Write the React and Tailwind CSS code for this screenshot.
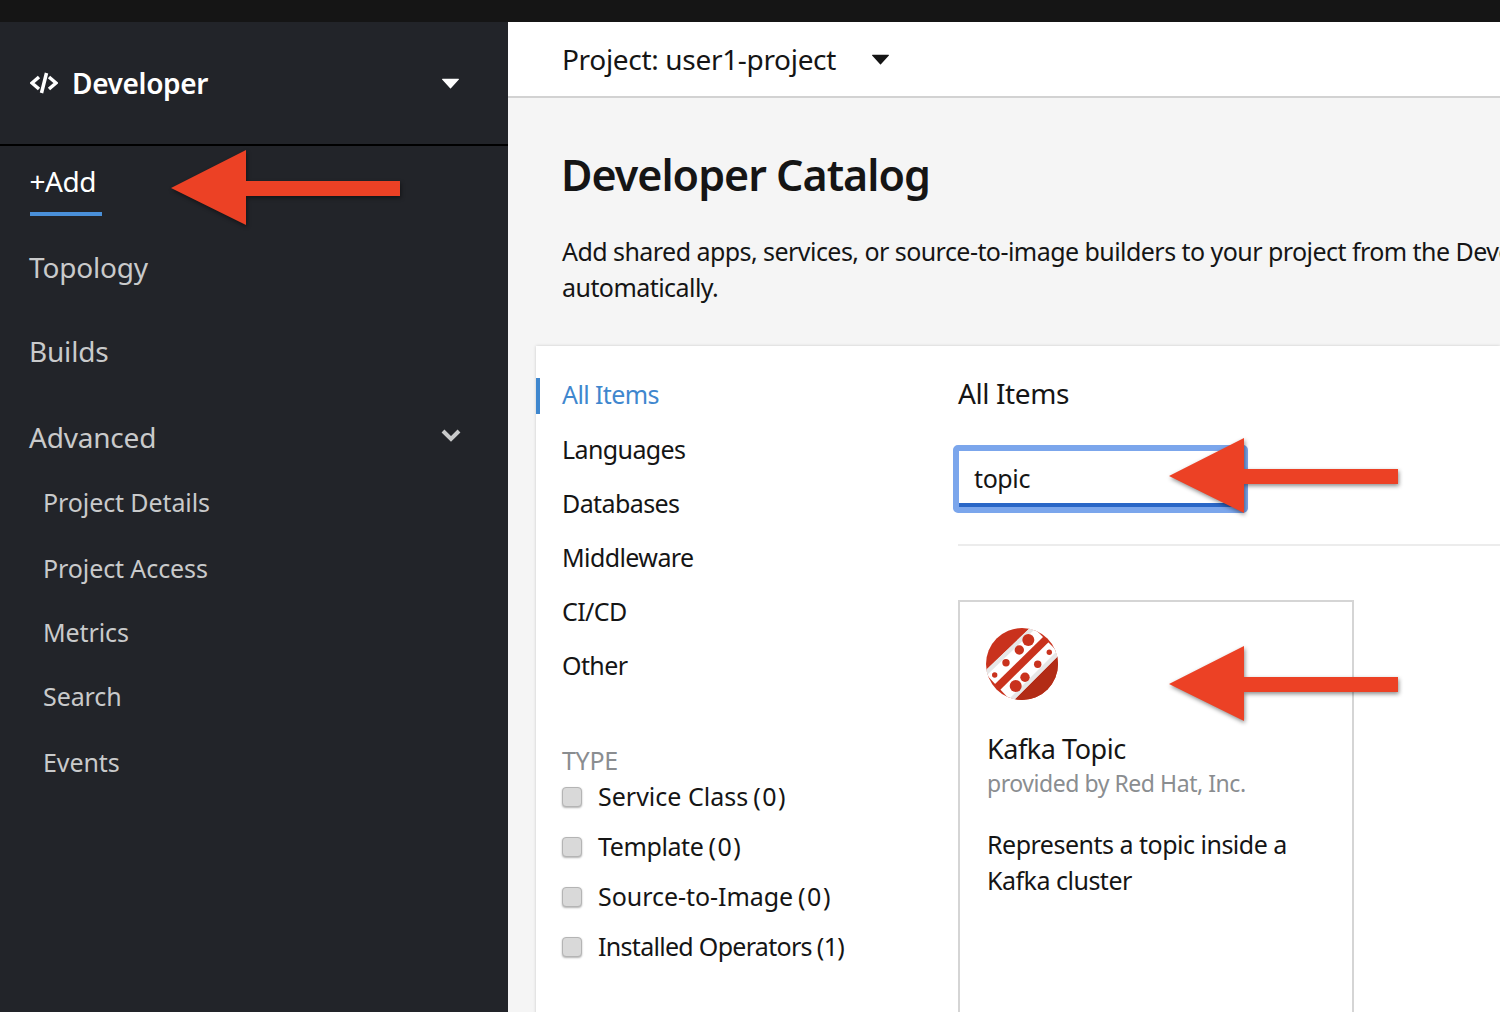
import React from 'react';

const font = { fontFamily: '"Noto Sans", sans-serif' };

const Caret = ({ className }) => (
  <svg viewBox="0 0 16 10" className={className} fill="currentColor">
    <path d="M0.5 0.5h15a0.5 0.5 0 0 1 .4.8L8.4 9.4a0.5 0.5 0 0 1-.8 0L0.1 1.3a0.5 0.5 0 0 1 .4-.8z" />
  </svg>
);

// red annotation arrow pasted over the screenshot
const Arrow = ({ className }) => (
  <svg viewBox="0 0 232 78" className={`absolute drop-shadow-[1px_2px_2px_rgba(0,0,0,0.45)] ${className}`}>
    <path d="M1 38 L76 0 V31 H230 V46 H76 V75 Z" fill="#ec4125" />
  </svg>
);

const KafkaLogo = () => (
  <svg viewBox="0 0 72 72" className="w-[72px] h-[72px]">
    <defs>
      <clipPath id="disc">
        <circle cx="36" cy="36" r="36" />
      </clipPath>
    </defs>
    <g clipPath="url(#disc)">
      <rect width="72" height="72" fill="#c9321d" />
      <path d="M26 74 L74 26 V74 Z" fill="#b22c16" />
      <path d="M-2 44 L46 -2 L74 26 L26 74 Z" fill="#ffffff" />
      <path d="M-2 44 L46 -2 L49 1 L1 47 Z" fill="#e6e6e6" />
      <path d="M74 26 L26 74 L23 71 L71 23 Z" fill="#e6e6e6" />
      <path d="M8 57 L57.3 8.7 L63 13.7 L13.3 62.7 Z" fill="#c9321d" />
      <circle cx="42.3" cy="12" r="6" fill="#c9321d" />
      <circle cx="33.3" cy="22" r="4.7" fill="#c9321d" />
      <circle cx="20" cy="34.7" r="3.7" fill="#c9321d" />
      <circle cx="8.7" cy="47" r="2.7" fill="#c9321d" />
      <circle cx="63.3" cy="24.3" r="2.7" fill="#c9321d" />
      <circle cx="51.7" cy="36.3" r="3.7" fill="#c9321d" />
      <circle cx="39" cy="49.3" r="4.7" fill="#c9321d" />
      <circle cx="29.7" cy="58" r="6" fill="#c9321d" />
    </g>
  </svg>
);

const SideLink = ({ label, className }) => (
  <div className={`pl-[29px] text-[28px] leading-[36px] tracking-[-0.2px] text-[#c9cacb] ${className}`}>{label}</div>
);

const SubLink = ({ label, className }) => (
  <div className={`pl-[43px] text-[25px] leading-[32px] tracking-[-0.1px] text-[#c9cacb] ${className}`}>{label}</div>
);

const CheckRow = ({ label, count, labelClass, countClass }) => (
  <div className="flex items-center h-[50px]">
    <span className="w-5 h-5 rounded-[4px] bg-[#d9d9d9] border border-[#b4b4b4] shadow-[0_1px_2px_rgba(0,0,0,0.3)]" />
    <span className="ml-4 text-[25px] text-[#151515] whitespace-nowrap">
      <span className={labelClass}>{label}</span>
      <span className={`ml-[5px] ${countClass}`}>({count})</span>
    </span>
  </div>
);

const NavRow = ({ label }) => (
  <div className="h-[54px] pb-[2px] flex items-center">{label}</div>
);

const Sidebar = () => (
  <aside className="w-[508px] shrink-0 bg-[#222429] relative">
    <div className="h-[122px] border-b-2 border-black box-content flex items-center pl-[30px] pr-[49px]">
      <svg viewBox="0 0 28 22" className="w-[28px] h-[22px] text-white" fill="none" stroke="currentColor" strokeWidth="3.5">
        <path d="M9 5 L2 11 L9 17 M19 5 L26 11 L19 17 M16.5 1 L11.5 21" />
      </svg>
      <span className="ml-[14px] text-[28px] font-semibold tracking-[-0.35px] text-white">Developer</span>
      <Caret className="ml-auto w-[17px] h-[11px] text-white" />
    </div>
    <div className="mt-[16px] ml-[30px] w-[72px] h-[54px] border-b-4 border-[#4a90d9] text-[28px] leading-[38px] tracking-[-0.5px] text-white -indent-[0.5px]">
      +Add
    </div>
    <SideLink label="Topology" className="mt-[33px]" />
    <SideLink label="Builds" className="mt-[48px]" />
    <div className="mt-[50px] flex items-center justify-between pr-[47px]">
      <SideLink label="Advanced" />
      <svg viewBox="0 0 20 14" className="w-[20px] h-[14px] -mt-[4px] text-[#c9cacb]" fill="none" stroke="currentColor" strokeWidth="4">
        <path d="M2 3 L10 11 L18 3" />
      </svg>
    </div>
    <SubLink label="Project Details" className="mt-[31px]" />
    <SubLink label="Project Access" className="mt-[34px]" />
    <SubLink label="Metrics" className="mt-[32px]" />
    <SubLink label="Search" className="mt-[32px]" />
    <SubLink label="Events" className="mt-[34px]" />
    <Arrow className="left-[170px] top-[128px] w-[232px] h-[78px]" />
  </aside>
);

const Catalog = () => (
  <div className="bg-white ml-[28px] mt-[41px] flex-1 flex shadow-[0_0_3px_rgba(0,0,0,0.18)] relative">
    <div className="w-[422px] shrink-0 pt-[32px]">
      <div className="border-l-4 border-[#3f87ce] pl-[22px] h-[36px] pb-[2px] flex items-center text-[25px] tracking-[-0.6px] text-[#3f87ce]">All Items</div>
      <div className="pl-[26px] text-[25px] text-[#151515]">
        <div className="mt-[10px] tracking-[-0.6px]">
          <NavRow label="Languages" />
          <NavRow label="Databases" />
          <NavRow label="Middleware" />
          <NavRow label="CI/CD" />
          <NavRow label="Other" />
        </div>
        <div className="mt-[48px] text-[25px] leading-[36px] tracking-[-0.3px] text-[#8a8d90]">TYPE</div>
        <div className="-mt-[6px]">
          <CheckRow label="Service Class" count="0" labelClass="tracking-[0px]" countClass="tracking-[1.5px]" />
          <CheckRow label="Template" count="0" labelClass="tracking-[-0.4px]" countClass="tracking-[1.5px]" />
          <CheckRow label="Source-to-Image" count="0" labelClass="tracking-[-0.05px]" countClass="tracking-[1.5px]" />
          <CheckRow label="Installed Operators" count="1" labelClass="tracking-[-0.7px]" countClass="tracking-[-0.7px]" />
        </div>
      </div>
    </div>
    <div className="flex-1 pt-[28px]">
      <div className="text-[28px] leading-[38px] tracking-[-0.4px] text-[#151515]">All Items</div>
      <div className="-ml-[5px] mt-[33px] w-[295px] h-[68px] rounded-[5px] bg-white border-[6px] border-[#7ba6ec] flex">
        <div className="flex-1 border-b-4 border-[#2a67c7] pl-[15px] pt-[4px] flex items-center text-[25px] tracking-[-0.4px] text-[#151515]">topic</div>
      </div>
      <div className="mt-[31px] border-t-2 border-[#ececec]" />
      <div className="mt-[54px] w-[396px] h-[500px] border-2 border-[#d5d5d5] pt-[26px] pl-[26px]">
        <KafkaLogo />
        <div className="ml-[1px] mt-[29px] text-[27px] leading-[40px] tracking-[-0.45px] text-[#151515]">Kafka Topic</div>
        <div className="ml-[1px] -mt-[1px] text-[23px] leading-[30px] tracking-[-0.45px] text-[#8a8d90]">provided by Red Hat, Inc.</div>
        <div className="ml-[1px] mt-[28px] w-[340px] text-[25px] leading-[36px] tracking-[-0.5px] text-[#151515]">Represents a topic inside a Kafka cluster</div>
      </div>
    </div>
    <Arrow className="left-[632px] top-[92px] w-[232px] h-[78px]" />
    <Arrow className="left-[632px] top-[300px] w-[232px] h-[78px]" />
  </div>
);

export default function App() {
  return (
    <div className="h-[1012px] w-[1500px] overflow-hidden flex flex-col bg-[#f5f5f5]" style={font}>
      <div className="h-[22px] shrink-0 bg-[#151515]" />
      <div className="flex-1 flex min-h-0">
        <Sidebar />
        <main className="flex-1 min-w-0 flex flex-col">
          <div className="h-[76px] shrink-0 bg-white border-b-2 border-[#d2d2d2] flex items-center pl-[54px]">
            <span className="text-[28px] tracking-[-0.32px] text-[#151515]">Project: user1-project</span>
            <Caret className="ml-[36px] w-[17px] h-[11px] text-[#151515]" />
          </div>
          <div className="pl-[54px] pt-[49px]">
            <h1 className="-ml-[1px] text-[43px] leading-[56px] font-semibold tracking-[-1px] text-[#151515]">Developer Catalog</h1>
            <p className="mt-[30px] text-[25px] leading-[36px] tracking-[-0.55px] text-[#151515] whitespace-nowrap">
              Add shared apps, services, or source-to-image builders to your project from the Developer Catalog.
              <br />
              automatically.
            </p>
          </div>
          <Catalog />
        </main>
      </div>
    </div>
  );
}
